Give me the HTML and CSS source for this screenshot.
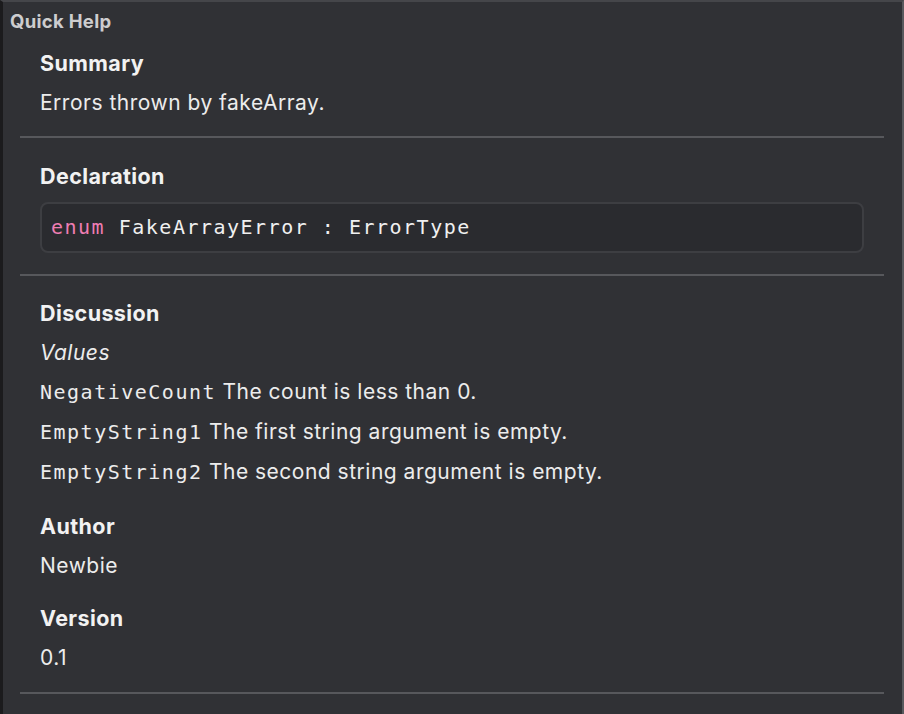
FILE: index.html
```html
<!DOCTYPE html>
<html>
<head>
<meta charset="utf-8">
<link rel="stylesheet" href="styles.css">
</head>
<body>
<div class="panel">
  <div class="title">Quick Help</div>
  <div class="sections">
    <section class="section section-summary">
      <h2 class="heading">Summary</h2>
      <p class="text">Errors thrown by fakeArray.</p>
    </section>
    <section class="section section-declaration">
      <h2 class="heading">Declaration</h2>
      <div class="code-box"><span class="kw">enum</span> FakeArrayError : ErrorType</div>
    </section>
    <section class="section section-discussion">
      <h2 class="heading">Discussion</h2>
      <p class="text italic">Values</p>
      <p class="text values"><code class="mono">NegativeCount</code> The count is less than 0.</p>
      <p class="text"><code class="mono">EmptyString1</code> The first string argument is empty.</p>
      <p class="text"><code class="mono">EmptyString2</code> The second string argument is empty.</p>
      <h2 class="heading author">Author</h2>
      <p class="text">Newbie</p>
      <h2 class="heading version">Version</h2>
      <p class="text">0.1</p>
    </section>
  </div>
</div>
</body>
</html>
```
FILE: styles.css
```css
html, body {
  margin: 0;
  padding: 0;
  background: #303135;
}
.panel {
  box-sizing: border-box;
  width: 904px;
  height: 714px;
  background: #303135;
  border-top: 2px solid #45464a;
  border-left: 3px solid #1b1b1d;
  border-right: 2px solid #58595d;
  font-family: "Inter", "Noto Sans", sans-serif;
  color: #ececec;
  overflow: hidden;
}
.title {
  font-size: 18.5px;
  font-weight: 700;
  letter-spacing: 0.3px;
  color: #cdcdcf;
  line-height: 22px;
  padding: 8px 0 0 7px;
}
.sections {
  padding: 0 18px 0 17px;
}
.section {
  border-bottom: 2px solid #57585c;
  padding: 11px 20px 13px 20px;
}
.section-declaration {
  padding-top: 18px;
}
.section-discussion {
  padding-top: 17px;
  padding-bottom: 14px;
}
.heading {
  margin: 0;
  font-size: 21.5px;
  font-weight: 700;
  letter-spacing: 0.4px;
  line-height: 40px;
  color: #f2f2f2;
}
.heading.author {
  margin-top: 14px;
}
.heading.version {
  margin-top: 12px;
}
.text {
  margin: 0;
  font-size: 21px;
  letter-spacing: 0.5px;
  line-height: 40px;
  color: #ececec;
}
.italic {
  font-style: italic;
}
.values {
  margin-top: -1px;
}
.mono, .code-box {
  font-family: "DejaVu Sans Mono", "Liberation Mono", monospace;
  font-size: 20px;
  letter-spacing: 1.5px;
}
.code-box {
  box-sizing: border-box;
  margin: 6px 0 8px 0;
  height: 51px;
  line-height: 47px;
  padding: 0 9px;
  border: 2px solid #3d3e42;
  border-radius: 8px;
  background: #2a2b2f;
  color: #f0f0f0;
}
.kw {
  color: #ee7db3;
}
```
